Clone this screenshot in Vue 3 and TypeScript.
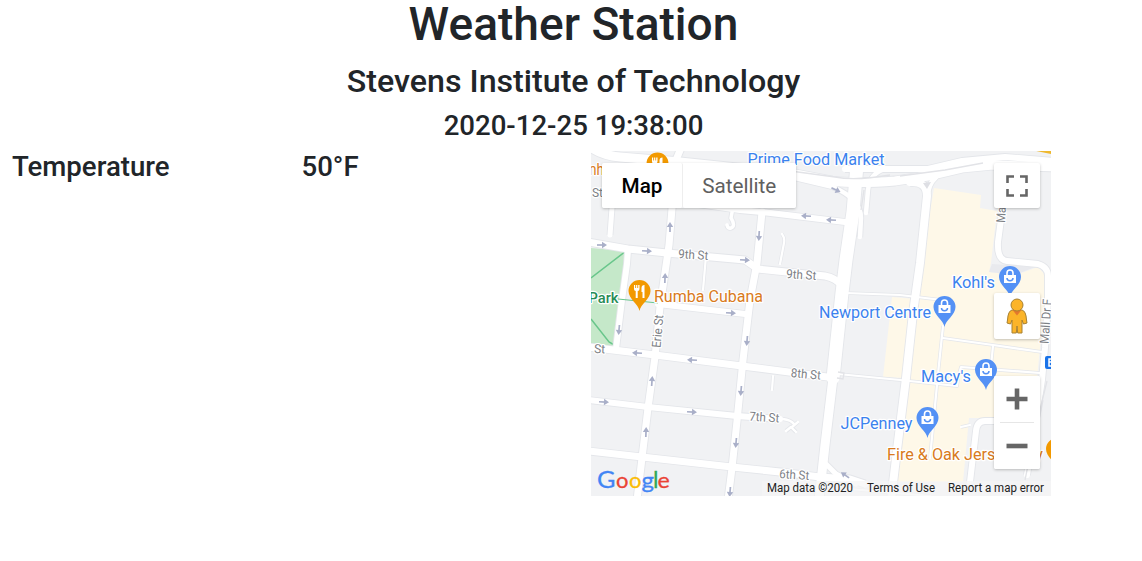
<script setup lang="ts">
interface Road { d: string; w: number }
interface Label { t: string; x: number; y: number; len: number; size: number; kind: string; rot?: number }
interface Point { x: number; y: number; a?: number }

const roads: Road[] = [
  { d: 'M588 145Q600 155 620 157L680 162L795 174L832 181Q857 184 895 181L928 176L962 168L993 165L1055 167', w: 9 },
  { d: 'M845 169L895 169L928 169L962 161L1005 157L1055 161', w: 6 },
  { d: 'M681 148L676 160L669 245L660 307L655 357L648 408L642 458L637 500', w: 7 },
  { d: 'M615 190L612 208L610 235', w: 5 },
  { d: 'M588 242L628 249L667 253L745 260L758 269L825 276Q836 278 842 286', w: 7 },
  { d: 'M628 250L627 264L622 300L616 349', w: 6 },
  { d: 'M588 347L655 355L742 366L835 378', w: 7 },
  { d: 'M762 212L757 263L750 300L743 360L737 421L732 468L728 500', w: 7 },
  { d: 'M690 203L740 210L762 212L845 222', w: 6 },
  { d: 'M733 207L731 218Q736 226 731 228Q728 229 727 225', w: 3.5 },
  { d: 'M588 400L648 407L737 416L783 419Q791 420 794 424M786 431L791 427L796 432M792 427L798 422', w: 2.4 },
  { d: 'M588 400L648 407L737 416L780 419', w: 6 },
  { d: 'M588 451L642 457L732 467L780 472L820 477L850 479L865 484', w: 7 },
  { d: 'M658 304L745 314', w: 6 },
  { d: 'M857 165L853 212L846 260L842 293L837 340L833 378', w: 13 },
  { d: 'M833 378L825 445L819 500', w: 9 },
  { d: 'M825 463L836 474L856 484', w: 5 },
  { d: 'M795 178L833 187Q861 199 861 218L860 237', w: 4.5 },
  { d: 'M866 213L868 190Q870 173 885 169L905 169', w: 4.5 },
  { d: 'M910 182Q927 181 927 196L920 263L913 313L906 378L897 450L891 500', w: 8 },
  { d: 'M936 177Q928 184 927 198', w: 5 },
  { d: 'M1005 183L1002 212L998 242Q997 260 1007 261L1038 264Q1048 267 1048 276L1048 300L1045 348L1042 380L1027 475', w: 6 },
  { d: 'M998 421L985 421Q977 421 976 431L970 482', w: 6 },
]
const lanes: string[] = [
  'M782 234Q785 238 784 243L780 264', 'M706 256L703 290', 'M846 293L900 295L942 300',
  'M943 326L938 374', 'M943 338L993 345L1042 352', 'M993 346L991 366', 'M959 374L961 367L1040 373',
  'M838 374L900 380L957 386L958 379', 'M937 385L930 458', 'M773 376L772 390', 'M850 489L930 496', 'M961 427L970 425',
]
const arrows: Point[] = [
  { x: 670, y: 227, a: -90 }, { x: 602, y: 245, a: 0 }, { x: 647, y: 251, a: 3 }, { x: 745, y: 260, a: 3 },
  { x: 836, y: 190, a: 25 }, { x: 806, y: 216, a: 183 }, { x: 831, y: 220, a: 183 }, { x: 759, y: 236, a: 93 },
  { x: 665, y: 278, a: -88 }, { x: 731, y: 313, a: 3 }, { x: 619, y: 330, a: 95 }, { x: 637, y: 353, a: 183 },
  { x: 692, y: 360, a: 183 }, { x: 652, y: 381, a: -86 }, { x: 747, y: 341, a: 95 }, { x: 604, y: 402, a: 3 },
  { x: 692, y: 412, a: 3 }, { x: 646, y: 432, a: -88 }, { x: 741, y: 391, a: 95 }, { x: 736, y: 443, a: 95 },
  { x: 730, y: 492, a: 95 }, { x: 845, y: 475, a: 215 },
]
const labels: Label[] = [
  { t: 'Prime Food Market', x: 747.5, y: 165, len: 137, size: 16, kind: 'blue' },
  { t: 'nh', x: 589, y: 175, len: 15, size: 16, kind: 'orange' },
  { t: 'St', x: 592, y: 197, len: 11, size: 12, kind: 'street' },
  { t: '9th St', x: 678, y: 258, len: 30, size: 12.5, kind: 'street', rot: 4 },
  { t: '9th St', x: 786, y: 278, len: 30, size: 12.5, kind: 'street', rot: 4 },
  { t: 'St', x: 594, y: 353, len: 11, size: 12.5, kind: 'street', rot: 2 },
  { t: '8th St', x: 790.5, y: 377, len: 30, size: 12.5, kind: 'street', rot: 5 },
  { t: '7th St', x: 749, y: 420.5, len: 30, size: 12.5, kind: 'street', rot: 4 },
  { t: '6th St', x: 779, y: 478, len: 30, size: 12.5, kind: 'street', rot: 4 },
  { t: 'Erie St', x: 660.5, y: 348, len: 33, size: 12.5, kind: 'street', rot: -85 },
  { t: 'Ma', x: 1005, y: 223, len: 16, size: 12.5, kind: 'street', rot: -87 },
  { t: 'Mall Dr F', x: 1048.5, y: 344, len: 45, size: 12.5, kind: 'street', rot: -86 },
  { t: 'Park', x: 588.5, y: 303, len: 30, size: 14, kind: 'green' },
  { t: 'Rumba Cubana', x: 654, y: 302, len: 109, size: 16, kind: 'orange' },
  { t: "Kohl's", x: 952, y: 288, len: 43, size: 16, kind: 'blue' },
  { t: 'Newport Centre', x: 819, y: 318, len: 112, size: 16, kind: 'blue' },
  { t: "Macy's", x: 921, y: 381.5, len: 50, size: 16, kind: 'blue' },
  { t: 'JCPenney', x: 840.5, y: 429, len: 72, size: 16, kind: 'blue' },
  { t: 'Fire & Oak Jersey City', x: 887, y: 460, len: 156, size: 16, kind: 'orange' },
]
const shops: Point[] = [{ x: 1010, y: 277 }, { x: 944.5, y: 307 }, { x: 986, y: 370 }, { x: 927.5, y: 418 }]
const food: Point[] = [{ x: 657.5, y: 163.5 }, { x: 639.5, y: 291 }, { x: 1057, y: 449 }]
const pin = 'M0 20C-1 13-11 8-11 0A11 11 0 0 1 11 0C11 8 1 13 0 20Z'
const logo = [
  { c: 'G', x: 597, f: '#4285f4', s: 23.5, w: 18.5 }, { c: 'o', x: 616, f: '#ea4335', s: 22, w: 12.5 },
  { c: 'o', x: 629, f: '#fbbc05', s: 22, w: 12.5 }, { c: 'g', x: 641.5, f: '#4285f4', s: 22, w: 12.5 },
  { c: 'l', x: 653, f: '#34a853', s: 23.5, w: 5.5 }, { c: 'e', x: 657.5, f: '#ea4335', s: 22, w: 12.3 },
]
</script>

<template>
  <main class="station">
    <header>
      <h1>Weather Station</h1>
      <h2>Stevens Institute of Technology</h2>
      <h3>2020-12-25 19:38:00</h3>
    </header>
    <section class="content">
      <h3 class="name">Temperature</h3>
      <h3 class="value">50°F</h3>
      <div class="map">
        <svg class="canvas" viewBox="591 151 460 345" width="460" height="345">
          <rect x="591" y="151" width="460" height="345" fill="#f1f2f4" />
          <path fill="#fef8e8" d="M934 188L981 195L980 208L997 211L991 263L989 272L1016 275L1038 267L1047 277L1037 378L1033 418L969 418L963 482L896 482L907 378L883 377L892 297L915 299Z" />
          <path fill="#e9eaee" d="M992 264L1035 267L1015 275L989 272Z" />
          <path fill="#c5e8c9" d="M591 248L626 251L614 347L591 343Z" />
          <path fill="none" stroke="#69c68b" stroke-width="1.5" d="M591 278L626 251M591 319L609 342L616 346" />
          <path class="case" v-for="(d, i) in lanes" :key="'lc' + i" :d="d" stroke-width="3.6" />
          <path class="case" v-for="(r, i) in roads" :key="'c' + i" :d="r.d" :stroke-width="r.w + 1.8" />
          <path class="road" v-for="(d, i) in lanes" :key="'l' + i" :d="d" stroke-width="2.2" />
          <path class="road" v-for="(r, i) in roads" :key="'r' + i" :d="r.d" :stroke-width="r.w" />
          <path fill="none" stroke="#e2e3e7" stroke-width="1.3" d="M783 170L835 177Q855 181 890 175M900 176L945 170L983 163M864 190L861 210M1047 381L1037 422L1025 480M1043 400L1032 455M838 372L844 373L843 379L837 378" />
          <path fill="#dedfe4" d="M923 183L931 182L927 189Z" />
          <path stroke="#eeb82e" stroke-width="3" d="M1034 149L1053 153" />
          <path stroke="#69c68b" stroke-width="1" d="M618 299L658 303" />
          <path v-for="(p, i) in arrows" :key="'a' + i" :transform="`translate(${p.x} ${p.y}) rotate(${p.a})`" d="M-5 0H2" class="arrow" />
          <path v-for="(p, i) in arrows" :key="'h' + i" :transform="`translate(${p.x} ${p.y}) rotate(${p.a})`" d="M0-3.2L5 0L0 3.2Z" fill="#a9afc8" />
          <text
            v-for="(l, i) in labels" :key="'t' + i" :class="['label', l.kind]" :x="l.x" :y="l.y"
            :font-size="l.size" :textLength="l.len" lengthAdjust="spacingAndGlyphs"
            :transform="l.rot ? `rotate(${l.rot} ${l.x} ${l.y})` : undefined"
          >{{ l.t }}</text>
          <g v-for="(p, i) in shops" :key="'s' + i" :transform="`translate(${p.x} ${p.y})`">
            <path :d="pin" fill="#5491f5" />
            <path d="M-6-2H6V6H-6Z" fill="#fff" />
            <path d="M-3-2V-4A3 3 0 0 1 3-4V-2" fill="none" stroke="#fff" stroke-width="1.6" />
            <path d="M-3 1A3 2.7 0 0 0 3 1" fill="none" stroke="#5491f5" stroke-width="1.5" />
          </g>
          <g v-for="(p, i) in food" :key="'f' + i" :transform="`translate(${p.x} ${p.y})`">
            <path :d="pin" fill="#f29900" />
            <path d="M-5.5-6V-2Q-5.5 0-3.8 0V7H-1.8V0Q0 0 0-2V-6H-1.3V-3H-2.2V-6H-3.4V-3H-4.3V-6ZM5-6Q2-6 2-3V1H3V7H5Z" fill="#fff" />
          </g>
          <rect x="1045" y="356" width="12" height="13" rx="2" fill="#1a73e8" />
          <path d="M1055 359H1049V366H1055M1049 362H1055" fill="none" stroke="#fff" stroke-width="1.5" />
          <rect x="762" y="481" width="289" height="15" fill="#f5f5f5" opacity=".7" />
          <text
            v-for="(l, i) in logo" :key="'g' + i" class="logo" :x="l.x" y="487.5" :fill="l.f" :stroke="l.f"
            :font-size="l.s" :textLength="l.w" lengthAdjust="spacingAndGlyphs"
          >{{ l.c }}</text>
          <g class="credit">
            <text x="767" y="492" textLength="86" lengthAdjust="spacingAndGlyphs">Map data ©2020</text>
            <text x="867" y="492" textLength="68" lengthAdjust="spacingAndGlyphs">Terms of Use</text>
            <text x="948" y="492" textLength="96" lengthAdjust="spacingAndGlyphs">Report a map error</text>
          </g>
        </svg>
        <div class="types">
          <button class="on">Map</button>
          <button>Satellite</button>
        </div>
        <div class="tools">
          <button class="tool">
            <svg width="22" height="22" viewBox="0 0 22 22"><path d="M1.5 8V1.5H8M14 1.5H20.5V8M20.5 14V20.5H14M8 20.5H1.5V14" fill="none" stroke="#666" stroke-width="2.6" /></svg>
          </button>
          <button class="tool person">
            <svg width="22" height="36" viewBox="0 0 22 36">
              <path d="M6 12Q2 13 1.5 22L1 25L4.5 26L6 22V35H10.3L11 28L11.7 35H16V22L17.5 26L21 25L20.5 22Q20 13 16 12Z" fill="#fbb429" stroke="#a78132" stroke-width="1" />
              <path d="M6.5 12H15.5L11 17.5Z" fill="#e3782d" />
              <circle cx="11" cy="7" r="6" fill="#fbb429" stroke="#a78132" />
            </svg>
          </button>
          <div class="zoom">
            <button><svg width="22" height="22" viewBox="0 0 22 22"><path d="M11 .5V21.5M.5 11H21.5" stroke="#666" stroke-width="4.6" /></svg></button>
            <i></i>
            <button><svg width="22" height="22" viewBox="0 0 22 22"><path d="M.5 11H21.5" stroke="#666" stroke-width="4.6" /></svg></button>
          </div>
        </div>
      </div>
    </section>
  </main>
</template>

<style>
body { margin: 0; background: #fff; overflow: hidden; }
</style>

<style scoped>
.station { width: 1147px; height: 561px; font-family: Roboto, "Liberation Sans", sans-serif; color: #212529; }
h1, h2, h3 { margin: 0; font-weight: 500; text-align: center; white-space: nowrap; }
header { height: 154px; margin-top: -3px; }
h1 { font-size: 46.1px; line-height: 55px; }
h2 { font-size: 32.2px; line-height: 39px; margin-top: 10px; }
h3 { font-size: 27.6px; line-height: 33px; }
header h3 { margin-top: 8px; }
.content { display: grid; grid-template-columns: 289.5px 289.5px 460px; align-items: start; padding-left: 12px; }
.name, .value { text-align: left; margin-top: -1px; }
.map { position: relative; width: 460px; height: 345px; overflow: hidden; }
.canvas { display: block; }
.case { fill: none; stroke: #e4e6ea; stroke-linejoin: round; }
.road { fill: none; stroke: #fff; stroke-linejoin: round; stroke-linecap: round; }
.arrow { stroke: #a9afc8; stroke-width: 1.7; }
.label { stroke: #fff; stroke-width: 2.4px; stroke-linejoin: round; paint-order: stroke; }
.blue { fill: #3b82ee; }
.orange { fill: #d97a20; }
.green { fill: #278c55; font-weight: 500; }
.street { fill: #7c8085; }
.logo { font-family: Lato, sans-serif; stroke-width: .3px; }
.credit { font-size: 12px; fill: #222; }
button { border: 0; padding: 0; margin: 0; background: #fff; font-family: inherit; display: flex; align-items: center; justify-content: center; }
.types { position: absolute; left: 11px; top: 12px; height: 45px; display: flex; border-radius: 2px; box-shadow: 0 1px 3px rgba(0,0,0,.24); }
.types button { width: 112.5px; font-size: 20.7px; color: #606060; border-radius: 2px; }
.types .on { width: 81px; color: #000; font-weight: 500; border-right: 1px solid #eee; box-sizing: border-box; }
.tools { position: absolute; left: 402.5px; top: 12px; width: 46px; display: flex; flex-direction: column; }
.tool { width: 46px; height: 45px; border-radius: 2px; box-shadow: 0 1px 3px rgba(0,0,0,.24); }
.person { margin-top: 85px; height: 46px; }
.zoom { margin-top: 37px; height: 93px; border-radius: 2px; background: #fff; box-shadow: 0 1px 3px rgba(0,0,0,.24); }
.zoom button { width: 46px; height: 46px; border-radius: 2px; }
.zoom i { display: block; width: 34px; height: 1px; margin: 0 auto; background: #e6e6e6; }
</style>
